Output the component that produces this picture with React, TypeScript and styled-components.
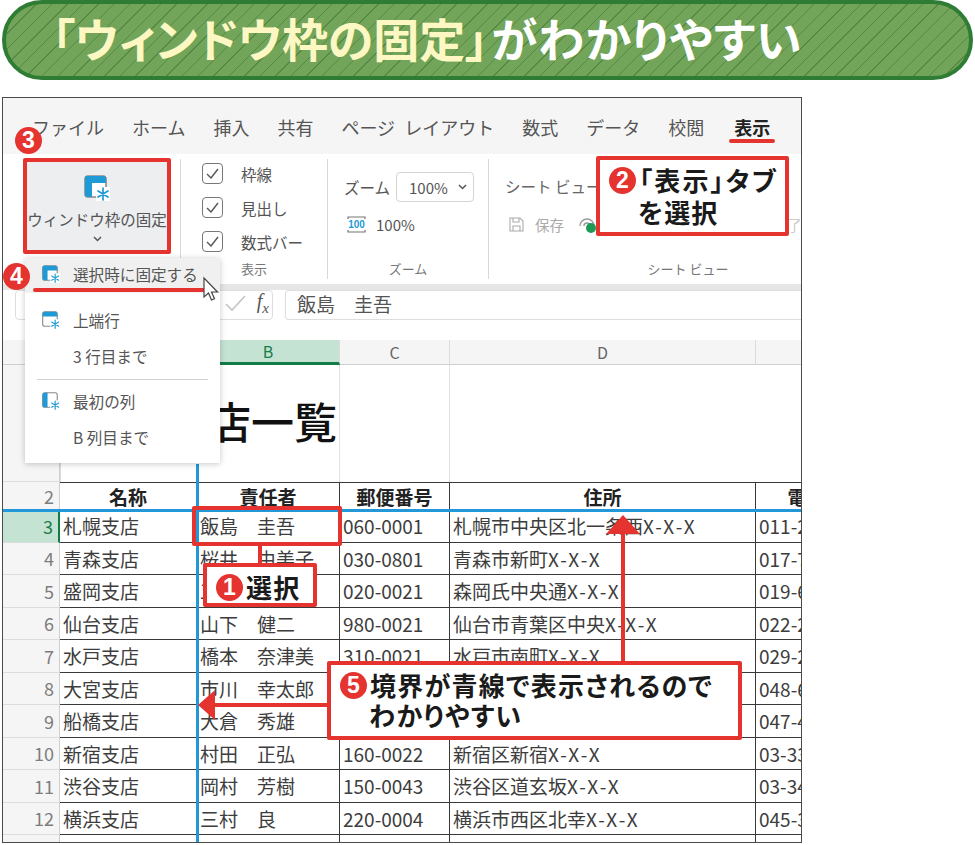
import React from "react";
import styled, { createGlobalStyle } from "styled-components";

const FONT = `"Noto Sans CJK JP", "Noto Sans", "Liberation Sans", sans-serif`;
const RED = "#e5332f";
const BLUE = "#2398d8";
const LINE = "#3a3a3a";

const Global = createGlobalStyle`
  html, body { margin: 0; padding: 0; background: #fff; }
  body { font-family: ${FONT}; width: 975px; height: 845px; overflow: hidden; }
`;

const Stage = styled.div`
  position: relative;
  width: 975px;
  height: 845px;
  padding: 0 2px;
  box-sizing: border-box;
  display: flex;
  flex-direction: column;
  gap: 17px;
`;

const Banner = styled.h1`
  margin: 0;
  height: 80px;
  box-sizing: border-box;
  border: 4px solid #2f7d34;
  border-radius: 40px;
  background-color: #72a559;
  background-image: repeating-linear-gradient(135deg, transparent 0 10px, #558a45 10px 11px);
  padding: 0 0 6px 46px;
  display: flex;
  align-items: center;
  font-size: 46px;
  line-height: 1;
  font-weight: 700;
  color: #fff;
  white-space: nowrap;
  letter-spacing: 1px;
  font-feature-settings: "palt";
`;

const Cream = styled.span`
  color: #fdf7c3;
  margin-right: 3px;
  letter-spacing: 0;
`;

const Win = styled.div`
  position: relative;
  width: 800px;
  height: 746px;
  box-sizing: border-box;
  border: 1px solid #4a4a4a;
  display: flex;
  flex-direction: column;
  overflow: hidden;
  background: #fff;
`;

const Tabs = styled.nav`
  height: 56px;
  flex: none;
  background: #f5f5f5;
  display: flex;
  align-items: center;
  gap: 28px;
  padding: 2px 0 0 29px;
  box-sizing: border-box;
`;

const Tab = styled.span<{ $on?: boolean }>`
  font-size: 18px;
  color: ${(p) => (p.$on ? "#222" : "#555")};
  font-weight: ${(p) => (p.$on ? 700 : 400)};
  white-space: nowrap;
  word-spacing: 5px;
  margin-left: ${(p) => (p.$on ? 2 : 0)}px;
`;

const Ribbon = styled.section`
  height: 136px;
  flex: none;
  box-sizing: border-box;
  background: #fff;
  display: flex;
  padding: 5px 0 5px 21px;
  border-bottom: 6px solid #e6e6e6;
  color: #555;
`;

const FreezeGroup = styled.div`
  width: 157px;
  flex: none;
  border-right: 1px solid #d8d8d8;
  box-sizing: border-box;
  padding-right: 10px;
`;

const FreezeBtn = styled.div`
  width: 146px;
  height: 93px;
  margin-top: 2px;
  background: #eceef0;
  display: flex;
  flex-direction: column;
  align-items: center;
  padding-top: 14px;
  box-sizing: border-box;
  font-size: 15.5px;
  white-space: nowrap;
  color: #555;
`;

const BtnLabel = styled.span`
  margin-top: 9px;
  line-height: 18px;
`;

const BtnChevron = styled.span`
  margin-top: 4px;
  line-height: 6px;
`;

const Group = styled.div<{ $w: number }>`
  width: ${(p) => p.$w}px;
  flex: none;
  box-sizing: border-box;
  border-right: 1px solid #d8d8d8;
  display: flex;
  flex-direction: column;
  position: relative;
`;

const GroupBody = styled.div`
  flex: 1;
`;

const GroupName = styled.div<{ $shift?: number }>`
  height: 20px;
  line-height: 20px;
  text-align: center;
  font-size: 13px;
  color: #777;
  padding-left: ${(p) => p.$shift ?? 0}px;
`;

const ChecksBody = styled(GroupBody)`
  padding: 4px 0 0 21px;
  display: flex;
  flex-direction: column;
  gap: 13px;
`;

const CheckRow = styled.div`
  display: flex;
  align-items: center;
  gap: 18px;
  height: 21px;
  font-size: 15.5px;
  color: #555;
`;

const CheckBox = styled.span`
  width: 19px;
  height: 19px;
  border: 1.5px solid #777;
  border-radius: 4px;
  display: flex;
  align-items: center;
  justify-content: center;
  flex: none;
`;

const ZoomBody = styled(GroupBody)`
  padding: 13px 0 0 16px;
`;

const ZoomRow = styled.div`
  display: flex;
  align-items: center;
  gap: 6px;
  font-size: 15.5px;
  color: #555;
`;

const ZoomSelect = styled.div`
  width: 78px;
  height: 30px;
  box-sizing: border-box;
  border: 1px solid #d4d4d4;
  border-radius: 4px;
  display: flex;
  align-items: center;
  justify-content: space-between;
  padding: 0 6px 0 12px;
  font-size: 15px;
`;

const ZoomLine = styled(ZoomRow)`
  margin: 12px 0 0 3px;
  font-size: 15px;
  gap: 10px;
`;

const SheetBody = styled(GroupBody)`
  padding: 16px 0 0 16px;
  font-size: 15.5px;
  color: #666;
  white-space: nowrap;
`;

const SaveRow = styled.div`
  margin-top: 17px;
  padding-left: 4px;
  display: flex;
  align-items: center;
  gap: 11px;
  color: #aaa;
  font-size: 14.5px;
`;

const LinkIcon = styled.svg`
  margin-left: 3px;
  flex: none;
`;

const FarLabel = styled.span`
  margin-left: 59px;
  color: #ccc;
`;

const LastGroup = styled(Group)`
  border-right: none;
`;

const FormulaBar = styled.div`
  height: 50px;
  flex: none;
  box-sizing: border-box;
  background: #fff;
  display: flex;
  gap: 12px;
  padding: 0 0 0 12px;
`;

const NameBox = styled.div`
  width: 258px;
  height: 30px;
  box-sizing: border-box;
  border: 1px solid #dedede;
  border-radius: 4px;
  display: flex;
  align-items: center;
  justify-content: flex-end;
  gap: 11px;
  padding: 0 3px 3px 0;
  color: #555;
`;

const FxMark = styled.span`
  font-family: "Liberation Serif", serif;
  font-style: italic;
  font-size: 20px;
  line-height: 1;
`;

const FxSub = styled.sub`
  font-size: 15px;
`;

const FormulaInput = styled.div`
  flex: 1;
  height: 30px;
  box-sizing: border-box;
  border: 1px solid #dedede;
  border-right: none;
  border-radius: 4px 0 0 4px;
  padding: 0 0 4px 11px;
  display: flex;
  align-items: center;
  font-size: 19px;
  color: #555;
  white-space: pre;
`;

const Sheet = styled.div`
  display: grid;
  grid-template-columns: 57px 137px 143px 110px 306px 140px;
  grid-template-rows: 25px 117px 28px repeat(10, 32.5px) 20px;
  flex: none;
  overflow: hidden;
  background: #fff;
`;

const ColHead = styled.div<{ $on?: boolean }>`
  box-sizing: border-box;
  background: ${(p) => (p.$on ? "#c4e3d3" : "#f5f5f5")};
  color: ${(p) => (p.$on ? "#1c7c4a" : "#666")};
  border-bottom: ${(p) => (p.$on ? "3px solid #127c48" : "1px solid #cfcfcf")};
  border-right: 1px solid #dcdcdc;
  display: flex;
  align-items: center;
  justify-content: center;
  font-size: 16px;
`;

const TitleRow = styled.div`
  grid-column: 2 / -1;
  display: grid;
  grid-template-columns: 280px 110px 1fr;
  box-shadow: inset 1px 0 0 #dcdcdc;
`;

const TitleCell = styled.div`
  border-right: 1px solid #e2e2e2;
  display: flex;
  align-items: center;
  padding: 0 0 8px 105px;
  font-size: 43px;
  font-weight: 500;
  color: #111;
  white-space: nowrap;
`;

const BlankCell = styled.div`
  border-right: 1px solid #e2e2e2;
`;

const RowHead = styled.div<{ $on?: boolean }>`
  box-sizing: border-box;
  background: ${(p) => (p.$on ? "#c4e3d3" : "#f5f5f5")};
  color: ${(p) => (p.$on ? "#1c7c4a" : "#7d7d7d")};
  border-bottom: 1px solid #dcdcdc;
  border-right: ${(p) => (p.$on ? "2px solid #127c48" : "1px solid #cfcfcf")};
  display: flex;
  align-items: center;
  justify-content: flex-end;
  padding-right: 5px;
  font-size: 18px;
`;

const Cell = styled.div<{ $head?: boolean; $top?: boolean }>`
  box-sizing: border-box;
  border-right: 1.5px solid ${LINE};
  border-bottom: 1.5px solid ${LINE};
  border-top: ${(p) => (p.$top ? `1.5px solid ${LINE}` : "none")};
  font-size: 19px;
  line-height: 1;
  color: #3d3d3d;
  display: flex;
  align-items: center;
  justify-content: ${(p) => (p.$head ? "center" : "flex-start")};
  font-weight: ${(p) => (p.$head ? 700 : 400)};
  padding-left: ${(p) => (p.$head ? 0 : 3)}px;
  white-space: pre;
  overflow: hidden;
`;

const HeadText = styled.span`
  color: #222;
  font-size: 19px;
`;

const Lot = styled.span`
  letter-spacing: 2px;
`;

const FreezeV = styled.div`
  position: absolute;
  left: 193px;
  top: 366px;
  bottom: 0;
  width: 3px;
  background: ${BLUE};
`;

const FreezeH = styled.div`
  position: absolute;
  left: 0;
  right: 0;
  top: 411px;
  height: 2.5px;
  background: ${BLUE};
`;

const Menu = styled.div`
  position: absolute;
  left: 25px;
  top: 258px;
  width: 195px;
  height: 205px;
  background: #fff;
  box-shadow: 0 1px 6px rgba(0, 0, 0, 0.22);
  display: flex;
  flex-direction: column;
  font-size: 15.6px;
  color: #555;
`;

const MenuItem = styled.div<{ $on?: boolean }>`
  height: 36px;
  flex: none;
  display: flex;
  align-items: center;
  gap: 13px;
  padding-left: 17px;
  background: ${(p) => (p.$on ? "#f0f0f0" : "transparent")};
`;

const MenuFirst = styled(MenuItem)`
  height: 35px;
  margin-bottom: 9px;
  padding-bottom: 3px;
  box-sizing: border-box;
`;

const MenuSub = styled(MenuItem)`
  padding-left: 48px;
`;

const MenuRule = styled.div`
  height: 1px;
  margin: 5px 12px 3px;
  background: #d0d0d0;
  flex: none;
`;

const RedFrame = styled.div<{ $x: number; $y: number; $w: number; $h: number }>`
  position: absolute;
  left: ${(p) => p.$x}px;
  top: ${(p) => p.$y}px;
  width: ${(p) => p.$w}px;
  height: ${(p) => p.$h}px;
  box-sizing: border-box;
  border: 4px solid ${RED};
  border-radius: 2px;
`;

const Note = styled(RedFrame)`
  background: #fff;
  color: #1a1a1a;
  font-weight: 700;
  font-size: 26px;
  line-height: 30px;
  font-feature-settings: "palt";
  white-space: nowrap;
  padding: 5px 0 0 9px;
`;

const NoteLine = styled.div<{ $indent?: number; $wide?: boolean; $lift?: number }>`
  display: flex;
  align-items: center;
  gap: 3px;
  padding-left: ${(p) => p.$indent ?? 0}px;
  letter-spacing: ${(p) => (p.$wide ? 2.2 : 1.2)}px;
  margin-top: ${(p) => p.$lift ?? 0}px;
`;

const Badge = styled.span`
  width: 27px;
  height: 27px;
  border-radius: 50%;
  background: ${RED};
  color: #fff;
  font-family: "Liberation Sans Narrow", "Liberation Sans", sans-serif;
  font-weight: 700;
  font-size: 23px;
  line-height: 27px;
  text-align: center;
  flex: none;
  letter-spacing: 0;
`;

const FloatBadge = styled(Badge)<{ $x: number; $y: number }>`
  position: absolute;
  left: ${(p) => p.$x}px;
  top: ${(p) => p.$y}px;
`;

const Underline = styled.div<{ $x: number; $y: number; $w: number }>`
  position: absolute;
  left: ${(p) => p.$x}px;
  top: ${(p) => p.$y}px;
  width: ${(p) => p.$w}px;
  height: 4px;
  border-radius: 2px;
  background: ${RED};
`;

const Drawing = styled.svg`
  position: absolute;
  left: 0;
  top: 0;
  pointer-events: none;
`;

const IconSvg = styled.svg`
  flex: none;
`;

const FreezeIcon = ({ size = 18, kind = "all" }: { size?: number; kind?: "all" | "top" | "left" }) => (
  <IconSvg width={size} height={size} viewBox="0 0 26 26">
    <rect x="1" y="1" width="21" height="21" rx="3" fill="#fff" stroke="#8a8a8a" strokeWidth="1.6" />
    {kind !== "left" && <path d="M1 8V4a3 3 0 0 1 3-3h15a3 3 0 0 1 3 3v4z" fill="#1e9ad6" />}
    {kind !== "top" && <path d="M1 4a3 3 0 0 1 3-3h4v21H4a3 3 0 0 1-3-3z" fill="#1e9ad6" />}
    <rect x="12" y="12" width="14" height="14" fill="#fff" />
    <g stroke="#1e9ad6" strokeWidth="1.7" strokeLinecap="round">
      <path d="M19 13v12M14 16l10 6M24 16l-10 6" />
    </g>
  </IconSvg>
);

const Check = () => (
  <svg width="13" height="11" viewBox="0 0 13 11">
    <path d="M1 6l4 4 7-9" fill="none" stroke="#555" strokeWidth="1.4" />
  </svg>
);

const Chevron = ({ c = "#555" }: { c?: string }) => (
  <svg width="9" height="6" viewBox="0 0 9 6">
    <path d="M1 1l3.5 3.5L8 1" fill="none" stroke={c} strokeWidth="1.5" />
  </svg>
);

const tabs = ["ファイル", "ホーム", "挿入", "共有", "ページ レイアウト", "数式", "データ", "校閲"];

const rows: [string, string, string, string, string][] = [
  ["札幌支店", "飯島　圭吾", "060-0001", "札幌市中央区北一条西", "011-222-XXXX"],
  ["青森支店", "桜井　由美子", "030-0801", "青森市新町", "017-777-XXXX"],
  ["盛岡支店", "工藤　和也", "020-0021", "森岡氏中央通", "019-666-XXXX"],
  ["仙台支店", "山下　健二", "980-0021", "仙台市青葉区中央", "022-222-XXXX"],
  ["水戸支店", "橋本　奈津美", "310-0021", "水戸市南町", "029-222-XXXX"],
  ["大宮支店", "市川　幸太郎", "330-0854", "さいたま市大宮区桜木町", "048-666-XXXX"],
  ["船橋支店", "大倉　秀雄", "273-0005", "船橋市本町", "047-444-XXXX"],
  ["新宿支店", "村田　正弘", "160-0022", "新宿区新宿", "03-3333-XXXX"],
  ["渋谷支店", "岡村　芳樹", "150-0043", "渋谷区道玄坂", "03-3444-XXXX"],
  ["横浜支店", "三村　良", "220-0004", "横浜市西区北幸", "045-333-XXXX"],
];

export default function App() {
  return (
    <>
      <Global />
      <Stage>
        <Banner>
          <Cream>「ウィンドウ枠の固定」</Cream>がわかりやすい
        </Banner>
        <Win>
          <Tabs>
            {tabs.map((t) => (
              <Tab key={t}>{t}</Tab>
            ))}
            <Tab $on>表示</Tab>
          </Tabs>
          <Ribbon>
            <FreezeGroup>
              <FreezeBtn>
                <FreezeIcon size={26} />
                <BtnLabel>ウィンドウ枠の固定</BtnLabel>
                <BtnChevron>
                  <Chevron />
                </BtnChevron>
              </FreezeBtn>
            </FreezeGroup>
            <Group $w={147}>
              <ChecksBody>
                {["枠線", "見出し", "数式バー"].map((t) => (
                  <CheckRow key={t}>
                    <CheckBox>
                      <Check />
                    </CheckBox>
                    {t}
                  </CheckRow>
                ))}
              </ChecksBody>
              <GroupName>表示</GroupName>
            </Group>
            <Group $w={161}>
              <ZoomBody>
                <ZoomRow>
                  ズーム
                  <ZoomSelect>
                    100%
                    <Chevron />
                  </ZoomSelect>
                </ZoomRow>
                <ZoomLine>
                  <svg width="19" height="19" viewBox="0 0 19 19">
                    <path d="M1 4V2h17v2M1 15v2h17v-2" fill="none" stroke="#777" strokeWidth="1.2" />
                    <text x="9.5" y="13" textAnchor="middle" fontSize="10" fontWeight="700" fill="#1e9ad6" fontFamily="Liberation Sans">
                      100
                    </text>
                  </svg>
                  100%
                </ZoomLine>
              </ZoomBody>
              <GroupName>ズーム</GroupName>
            </Group>
            <LastGroup $w={313}>
              <SheetBody>
                シート ビュー
                <SaveRow>
                  <svg width="15" height="15" viewBox="0 0 15 15">
                    <path d="M1 1h10l3 3v10H1zM4 1v4h6V1M4 14V9h7v5" fill="none" stroke="#aaa" strokeWidth="1.1" />
                  </svg>
                  保存
                  <LinkIcon width="20" height="18" viewBox="0 0 20 18">
                    <path d="M2 10a7 7 0 0 1 14 0M6 10a3 3 0 0 1 6 0" fill="none" stroke="#999" strokeWidth="1.4" />
                    <circle cx="13" cy="12" r="5" fill="#1e9a55" />
                  </LinkIcon>
                  <FarLabel>シート ビューを終了</FarLabel>
                </SaveRow>
              </SheetBody>
              <GroupName $shift={85}>シート ビュー</GroupName>
            </LastGroup>
          </Ribbon>
          <FormulaBar>
            <NameBox>
              <svg width="21" height="17" viewBox="0 0 21 17">
                <path d="M1 9l6 6L20 1" fill="none" stroke="#c4c4c4" strokeWidth="1.6" />
              </svg>
              <FxMark>
                f<FxSub>x</FxSub>
              </FxMark>
            </NameBox>
            <FormulaInput>飯島　圭吾</FormulaInput>
          </FormulaBar>
          <Sheet>
            <ColHead />
            <ColHead>A</ColHead>
            <ColHead $on>B</ColHead>
            <ColHead>C</ColHead>
            <ColHead>D</ColHead>
            <ColHead>E</ColHead>

            <RowHead>1</RowHead>
            <TitleRow>
              <TitleCell>支店一覧</TitleCell>
              <BlankCell />
              <div />
            </TitleRow>

            <RowHead>2</RowHead>
            {["名称", "責任者", "郵便番号", "住所", "電話番号"].map((h) => (
              <Cell $head $top key={h}>
                <HeadText>{h}</HeadText>
              </Cell>
            ))}

            {rows.map((r, i) => (
              <React.Fragment key={r[0]}>
                <RowHead $on={i === 0}>{i + 3}</RowHead>
                <Cell>{r[0]}</Cell>
                <Cell>{r[1]}</Cell>
                <Cell>{r[2]}</Cell>
                <Cell>
                  {r[3]}
                  <Lot>X-X-X</Lot>
                </Cell>
                <Cell>{r[4]}</Cell>
              </React.Fragment>
            ))}
            <RowHead />
            <Cell />
            <Cell />
            <Cell />
            <Cell />
            <Cell />
          </Sheet>
          <FreezeV />
          <FreezeH />
        </Win>

        <Menu>
          <MenuFirst $on>
            <FreezeIcon />
            選択時に固定する
          </MenuFirst>
          <MenuItem>
            <FreezeIcon kind="top" />
            上端行
          </MenuItem>
          <MenuSub>3 行目まで</MenuSub>
          <MenuRule />
          <MenuItem>
            <FreezeIcon kind="left" />
            最初の列
          </MenuItem>
          <MenuSub>B 列目まで</MenuSub>
        </Menu>

        <RedFrame $x={23} $y={158} $w={148} $h={96} />
        <RedFrame $x={192} $y={506} $w={150} $h={40} />
        <Underline $x={729} $y={139} $w={46} />
        <Underline $x={33} $y={288} $w={172} />

        <Drawing width="975" height="845" viewBox="0 0 975 845">
          <path d="M260 546v18" stroke={RED} strokeWidth="4" />
          <path d="M623 662V530" stroke={RED} strokeWidth="4" />
          <path d="M623 515l17 19h-34z" fill={RED} />
          <path d="M328 705H212" stroke={RED} strokeWidth="4" />
          <path d="M198 705l17-15v30z" fill={RED} />
          <path d="M204 278v19l4.500-4 3 7 3-1.300-3-6.700h6z" fill="#fff" stroke="#444" strokeWidth="1.2" />
        </Drawing>

        <Note $x={596} $y={156} $w={193} $h={80}>
          <NoteLine $wide>
            <Badge>2</Badge>「表示」タブ
          </NoteLine>
          <NoteLine $indent={29} $lift={2}>を選択</NoteLine>
        </Note>
        <Note $x={203} $y={563} $w={114} $h={44}>
          <NoteLine>
            <Badge>1</Badge>選択
          </NoteLine>
        </Note>
        <Note $x={327} $y={661} $w={415} $h={79}>
          <NoteLine>
            <Badge>5</Badge>境界が青線で表示されるので
          </NoteLine>
          <NoteLine $indent={29}>わかりやすい</NoteLine>
        </Note>

        <FloatBadge $x={15} $y={127}>3</FloatBadge>
        <FloatBadge $x={3} $y={263}>4</FloatBadge>
      </Stage>
    </>
  );
}
